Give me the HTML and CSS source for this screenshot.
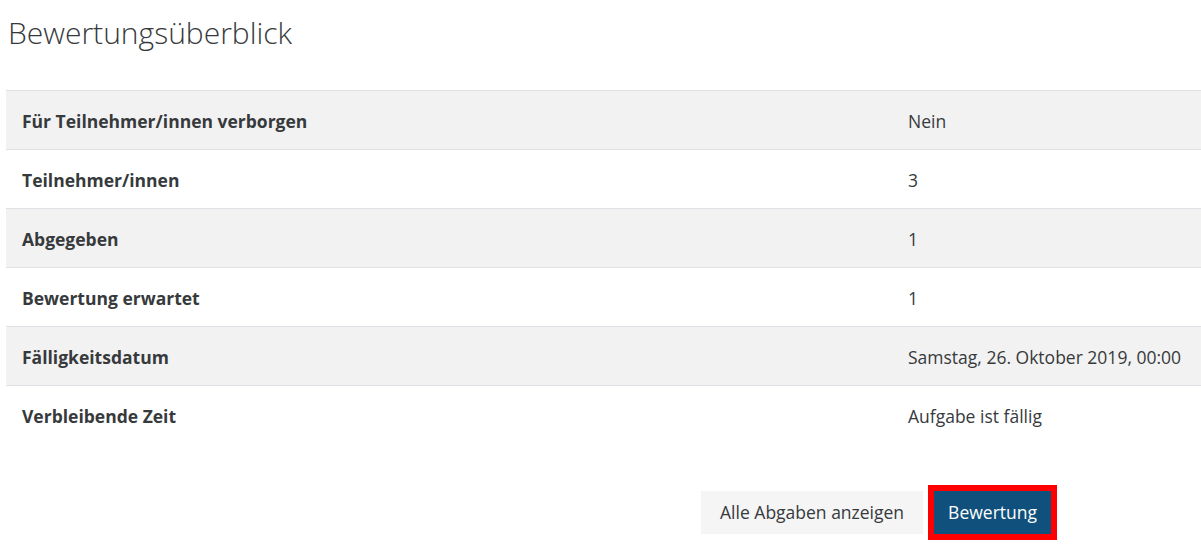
FILE: index.html
```html
<!DOCTYPE html>
<html lang="de">
<head>
  <meta charset="UTF-8">
  <title>Bewertungsüberblick</title>
  <link rel="stylesheet" href="styles.css">
</head>
<body>
  <div class="page">
    <h2 class="title">Bewertungsüberblick</h2>

    <table class="summary">
      <tbody>
        <tr>
          <th>Für Teilnehmer/innen verborgen</th>
          <td>Nein</td>
        </tr>
        <tr>
          <th>Teilnehmer/innen</th>
          <td>3</td>
        </tr>
        <tr>
          <th>Abgegeben</th>
          <td>1</td>
        </tr>
        <tr>
          <th>Bewertung erwartet</th>
          <td>1</td>
        </tr>
        <tr>
          <th>Fälligkeitsdatum</th>
          <td>Samstag, 26. Oktober 2019, 00:00</td>
        </tr>
        <tr>
          <th>Verbleibende Zeit</th>
          <td>Aufgabe ist fällig</td>
        </tr>
      </tbody>
    </table>

    <div class="actions">
      <a href="#" class="btn btn-secondary">Alle Abgaben anzeigen</a>
      <span class="highlight">
        <a href="#" class="btn btn-primary">Bewertung</a>
      </span>
    </div>
  </div>
</body>
</html>
```

FILE: styles.css
```css
* {
  margin: 0;
  padding: 0;
  box-sizing: border-box;
}

body {
  font-family: "Open Sans", "Noto Sans", sans-serif;
  font-size: 17.5px;
  color: #373a3c;
  background-color: #fff;
}

.page {
  padding-left: 6px;
}

/* Heading */
.title {
  font-weight: 300;
  font-size: 30px;
  line-height: 36px;
  padding: 15px 0 0 2px;
  height: 90px;
}

/* Summary table */
.summary {
  width: 100%;
  border-collapse: collapse;
}

.summary th,
.summary td {
  height: 59px;
  padding: 2px 16px 0;
  border-top: 1px solid #dee2e6;
  text-align: left;
  vertical-align: middle;
}

.summary th {
  width: 886px;
  font-weight: bold;
}

.summary tr:nth-child(odd) {
  background-color: #f2f2f2;
}

/* Buttons */
.actions {
  display: flex;
  justify-content: flex-end;
  align-items: center;
  gap: 5px;
  margin-top: 40px;
  padding-right: 144px;
}

.btn {
  display: inline-block;
  line-height: 43px;
  text-decoration: none;
}

.btn-secondary {
  background-color: #f5f5f5;
  color: #373a3c;
  padding: 0 19px;
}

.highlight {
  border: 6px solid #f00;
  display: inline-block;
}

.btn-primary {
  background-color: #10507c;
  color: #fff;
  padding: 0 14px;
}
```
